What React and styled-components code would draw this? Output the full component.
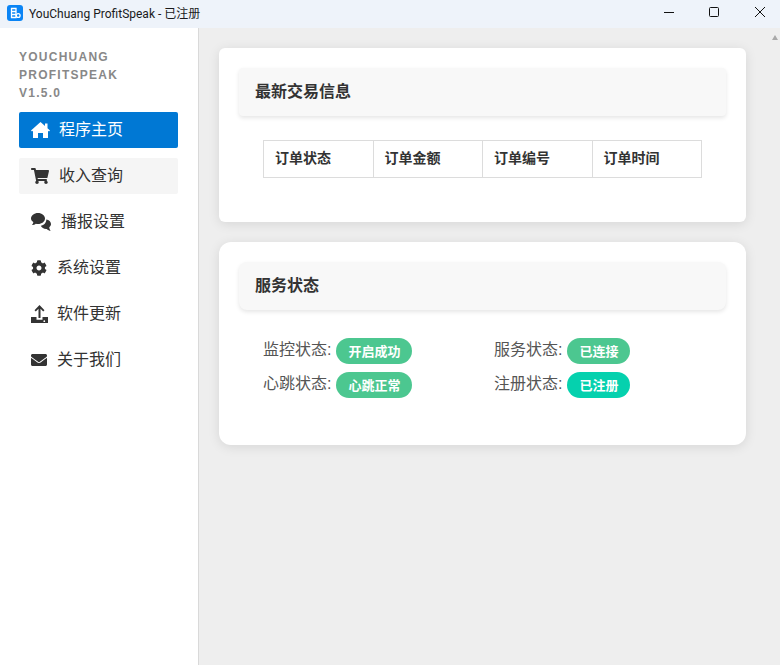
import React from "react";
import styled, { createGlobalStyle } from "styled-components";
import { FaShoppingCart, FaCog, FaEnvelope } from "react-icons/fa";

const Global = createGlobalStyle`
  html, body { margin: 0; padding: 0; height: 100%; }
  body { font-family: "Liberation Sans", "Noto Sans CJK SC", sans-serif; background: #eee; overflow: hidden; }
  #root { height: 100%; }
`;
const CJK = `"Liberation Sans", "Noto Sans CJK SC", sans-serif`;

const Window = styled.div`
  width: 780px; height: 665px; display: flex; flex-direction: column; overflow: hidden;
`;
const TitleBar = styled.header`
  height: 28px; flex: none; background: #eef3fa; display: flex; align-items: center; padding-left: 7px;
`;
const AppIcon = styled.svg`width: 16px; height: 16px; flex: none; margin-bottom: 3px;`;
const TitleText = styled.span`
  margin-left: 6px; margin-bottom: 3px; font: 12px Roboto, "Noto Sans CJK SC", sans-serif; color: #1a1a1a; white-space: nowrap;
`;
const WinControls = styled.div`margin: 0 -2.5px 0 auto; display: flex; height: 28px;`;
const WinButton = styled.div`
  width: 45.5px; height: 24px; display: flex; align-items: center; justify-content: center;
`;
const Body = styled.div`flex: 1; display: flex; min-height: 0;`;
const Sidebar = styled.aside`
  width: 199px; flex: none; background: #fff; border-right: 1px solid #d9d9d9;
  padding: 20px 20px 0 19px; box-sizing: border-box;
`;
const Brand = styled.div`
  font-size: 12px; font-weight: 700; letter-spacing: 1.25px; line-height: 18px; color: #888; margin-bottom: 10px;
`;
const Menu = styled.nav`display: flex; flex-direction: column; gap: 10px;`;
const MenuItem = styled.div`
  height: 36px; width: 159px; border-radius: 2px; display: flex; align-items: center; padding-left: 12px;
  box-sizing: border-box; white-space: nowrap;
  background: ${p => p.$active ? "#0078d4" : p.$hover ? "#f5f5f5" : "transparent"};
  color: ${p => p.$active ? "#fff" : "#333"};
`;
const MenuLabel = styled.span`font: 16px/20px ${CJK}; margin-bottom: 1px;`;
const IconSlot = styled.span`
  width: ${p => p.$w}px; flex: none; display: flex; align-items: center; margin-bottom: 1px;
`;
const Main = styled.main`
  flex: 1; display: flex; flex-direction: column; gap: 20px; padding: 20px 34px 0 20px; position: relative;
`;
const ScrollArrow = styled.div`
  position: absolute; top: 7px; right: 2px; width: 0; height: 0;
  border-left: 3.5px solid transparent; border-right: 3.5px solid transparent; border-bottom: 5px solid #a9a9a9;
`;
const Card = styled.section`
  background: #fff; padding: 20px; border-radius: ${p => p.$radius}px;
  box-shadow: 0 2px 12px rgba(0,0,0,.1); height: ${p => p.$h}px; box-sizing: border-box;
`;
const CardHeader = styled.div`
  height: 48px; background: #f8f8f8; border-radius: ${p => p.$radius}px; box-shadow: 0 2px 4px rgba(0,0,0,.1);
  display: flex; align-items: center; padding: 0 0 4px 16px; box-sizing: border-box; font: 700 16px ${CJK}; color: #333;
`;
const Table = styled.table`
  border-collapse: collapse; margin: 24px 0 0 24px; width: 439px; table-layout: fixed;
`;
const Th = styled.th`
  border: 1px solid #dcdcdc; height: 37px; padding: 0 0 4px 11px; text-align: left; box-sizing: border-box;
  font: 700 14px ${CJK}; color: #333;
`;
const StatusGrid = styled.div`
  display: grid; grid-template-columns: 231px 1fr; row-gap: 8px; margin: 28px 0 0 24px;
`;
const StatusItem = styled.div`display: flex; align-items: center; height: 26px;`;
const StatusLabel = styled.span`font: 16px/20px ${CJK}; color: #555; white-space: nowrap; margin: 0 5px 2px 0;`;
const Badge = styled.span`
  height: 26px; padding: 0 11.5px 2px 12px; box-sizing: border-box; border-radius: 13px; background: ${p => p.$color}; color: #fff;
  display: inline-flex; align-items: center; font: 700 13px ${CJK}; white-space: nowrap;
`;

const HomeIcon = () => (
  <svg width="19" height="16" viewBox="0 0 19 16" fill="currentColor">
    <path d="M9.5 0 14 4V1.5h2.5V6.2L19 8.4l-1 1.1-1-.8V16h-5v-5H7v5H2V8.7l-1 .8-1-1.1z" />
  </svg>
);
const ChatIcon = () => (
  <svg width="20" height="18" viewBox="0 0 20 18" fill="currentColor">
    <path d="M7 0c3.900 0 7 2.500 7 5.500S10.900 11 7 11c-.8 0-1.500-.1-2.200-.3C3.600 11.700 2.300 12 1 12c.8-.8 1.300-1.800 1.300-2.900C.9 8.100 0 6.900 0 5.500 0 2.500 3.100 0 7 0z" />
    <path d="M15.300 6.500C18 7 20 8.800 20 11c0 1.300-.7 2.400-1.700 3.200 0 1.300.5 2.500 1.400 3.500-1.400 0-2.900-.6-4-1.800-2.600.2-5-1-5.900-3.100 3.100-.4 5.600-3.100 5.500-6.300z" />
  </svg>
);
const UploadIcon = () => (
  <svg width="17" height="18" viewBox="0 0 17 18" fill="currentColor">
    <path d="M8.500 0 13.500 5.300 12.200 6.600 9.500 3.800V13h-2V3.800L4.800 6.600 3.500 5.300z" />
    <path d="M0 12h5.500v2.800h6V12H17v6H0zm13.300 3.300a.9.9 0 1 0 0 1.800.9.9 0 0 0 0-1.800z" fillRule="evenodd" />
  </svg>
);

const menu = [
  { label: "程序主页", icon: <HomeIcon />, w: 28, active: true },
  { label: "收入查询", icon: <FaShoppingCart size={18} />, w: 28, hover: true },
  { label: "播报设置", icon: <ChatIcon />, w: 30 },
  { label: "系统设置", icon: <FaCog size={16} />, w: 26 },
  { label: "软件更新", icon: <UploadIcon />, w: 26 },
  { label: "关于我们", icon: <FaEnvelope size={16} />, w: 26 },
];
const status = [
  { label: "监控状态:", value: "开启成功", color: "#4cc790" },
  { label: "服务状态:", value: "已连接", color: "#4cc790" },
  { label: "心跳状态:", value: "心跳正常", color: "#4cc790" },
  { label: "注册状态:", value: "已注册", color: "#05d1ae" },
];

export default function App() {
  return (
    <Window>
      <Global />
      <TitleBar>
        <AppIcon viewBox="0 0 16 16">
          <rect width="16" height="16" rx="3" fill="#0a84f5" />
          <path d="M4.500 3.500h4.500v9h-4.500z M4.500 6.500h4.500 M4.500 9.500h4.500" fill="none" stroke="#fff" strokeWidth="1.300" />
          <circle cx="11.200" cy="10.500" r="1.900" fill="#0a84f5" stroke="#fff" strokeWidth="1.300" />
        </AppIcon>
        <TitleText>YouChuang ProfitSpeak - 已注册</TitleText>
        <WinControls>
          <WinButton>
            <svg width="10" height="10" viewBox="0 0 10 10"><path d="M0 5.500h10" stroke="#111" strokeWidth="1" /></svg>
          </WinButton>
          <WinButton>
            <svg width="10" height="10" viewBox="0 0 10 10"><rect x=".5" y=".5" width="9" height="9" rx="1" fill="none" stroke="#111" /></svg>
          </WinButton>
          <WinButton>
            <svg width="10" height="10" viewBox="0 0 10 10"><path d="M0 0l10 10M10 0L0 10" stroke="#111" strokeWidth="1" /></svg>
          </WinButton>
        </WinControls>
      </TitleBar>
      <Body>
        <Sidebar>
          <Brand>YOUCHUANG<br />PROFITSPEAK<br />V1.5.0</Brand>
          <Menu>
            {menu.map(({ label, icon, w, active, hover }) => (
              <MenuItem key={label} $active={active} $hover={hover}>
                <IconSlot $w={w}>{icon}</IconSlot>
                <MenuLabel>{label}</MenuLabel>
              </MenuItem>
            ))}
          </Menu>
        </Sidebar>
        <Main>
          <ScrollArrow />
          <Card $h={174} $radius={6}>
            <CardHeader $radius={4}>最新交易信息</CardHeader>
            <Table>
              <thead>
                <tr>
                  <Th>订单状态</Th><Th>订单金额</Th><Th>订单编号</Th><Th>订单时间</Th>
                </tr>
              </thead>
            </Table>
          </Card>
          <Card $h={203} $radius={12}>
            <CardHeader $radius={8}>服务状态</CardHeader>
            <StatusGrid>
              {status.map(s => (
                <StatusItem key={s.label}>
                  <StatusLabel>{s.label}</StatusLabel>
                  <Badge $color={s.color}>{s.value}</Badge>
                </StatusItem>
              ))}
            </StatusGrid>
          </Card>
        </Main>
      </Body>
    </Window>
  );
}
